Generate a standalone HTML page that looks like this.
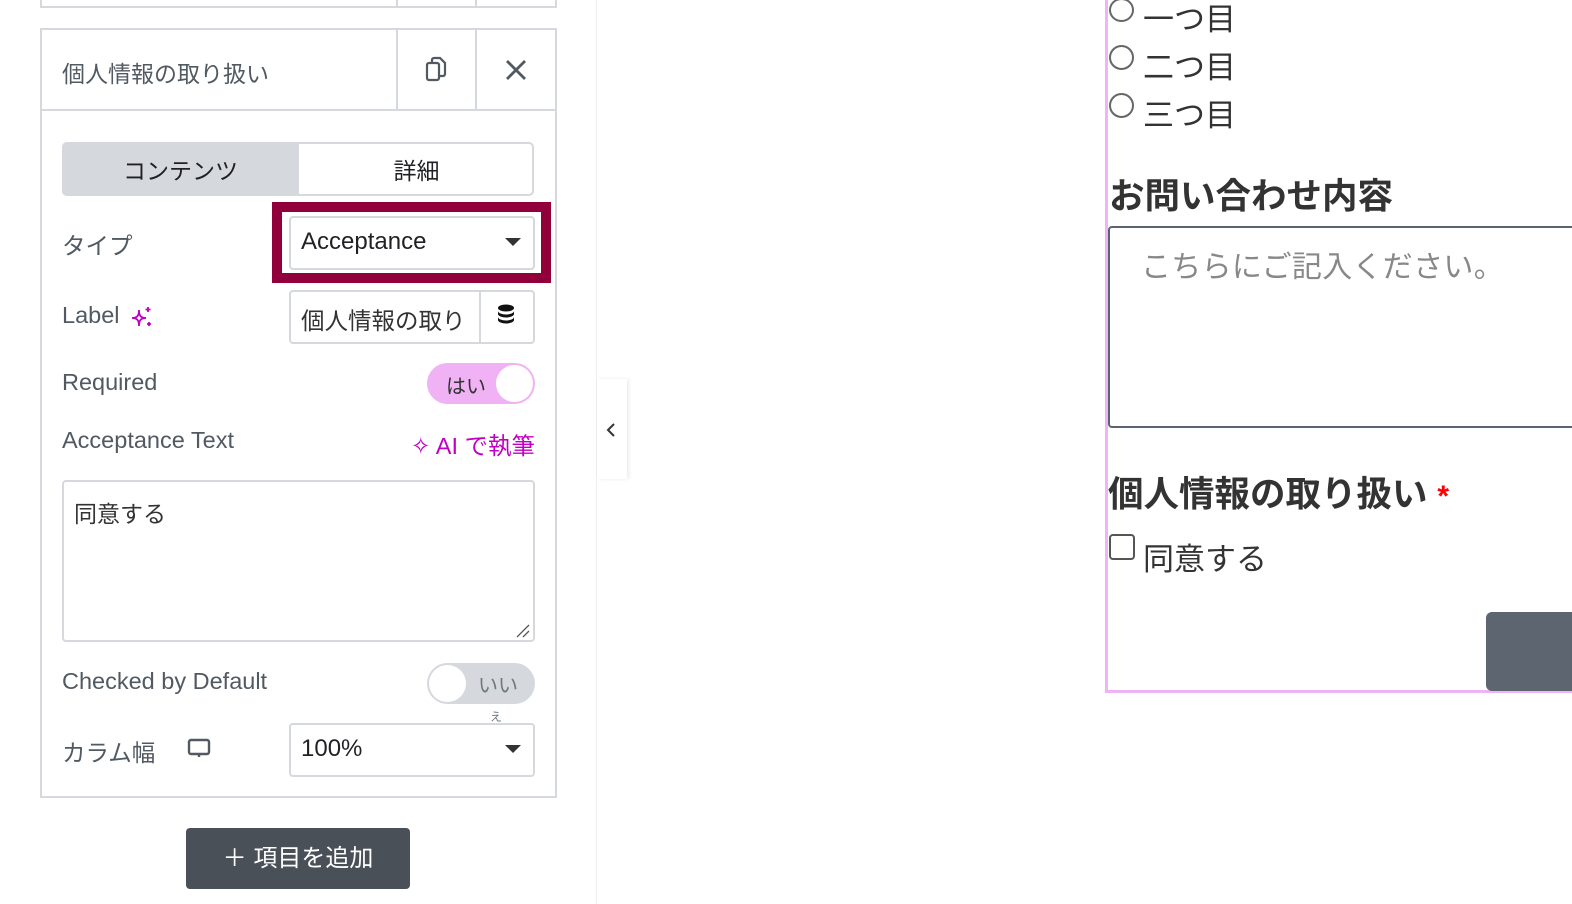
<!DOCTYPE html>
<html><head><meta charset="utf-8"><style>
*{box-sizing:border-box;margin:0;padding:0}
body{width:1572px;height:904px;position:relative;overflow:hidden;background:#fff;font-family:"Liberation Sans","Noto Sans CJK JP",sans-serif;color:#515962}
.a{position:absolute}
.lbl{font-size:23.5px;color:#515962}
.inp{border:2px solid #d5d8dc;border-radius:4px;background:#fff}
</style></head><body>
<div class="a" style="left:0;top:0;width:597px;height:904px;background:#fff;border-right:1px solid #eceef0"></div>
<div class="a" style="left:40px;top:-10px;width:517px;height:18px;border:2px solid #d5d8dc"></div>
<div class="a" style="left:396px;top:0;width:2px;height:8px;background:#d5d8dc"></div>
<div class="a" style="left:475px;top:0;width:2px;height:8px;background:#d5d8dc"></div>
<div class="a" style="left:40px;top:28px;width:517px;height:770px;border:2px solid #d5d8dc"></div>
<div class="a" style="left:40px;top:109px;width:517px;height:2px;background:#d5d8dc"></div>
<div class="a" style="left:396px;top:28px;width:2px;height:82px;background:#d5d8dc"></div>
<div class="a" style="left:475px;top:28px;width:2px;height:82px;background:#d5d8dc"></div>
<div class="a" style="left:62px;top:55px;font-size:23px;color:#515962">個人情報の取り扱い</div>
<svg class="a" style="left:424px;top:56px" width="24" height="28" viewBox="0 0 24 28" fill="none" stroke="#515962" stroke-width="2.2"><rect x="3" y="7" width="12" height="17" rx="2"/><path d="M8 7V4a2 2 0 0 1 2-2h6l5 5v11a2 2 0 0 1-2 2h-4"/></svg>
<svg class="a" style="left:505px;top:59px" width="22" height="22" viewBox="0 0 22 22" stroke="#515962" stroke-width="2.8"><path d="M2 2L20 20M20 2L2 20"/></svg>
<div class="a" style="left:62px;top:142px;width:472px;height:54px;border:2px solid #d5d8dc;border-radius:5px;background:#fff"></div>
<div class="a" style="left:62px;top:142px;width:237px;height:54px;background:#d5d8dc;border-radius:5px 0 0 5px"></div>
<div class="a" style="left:62px;top:152px;width:237px;text-align:center;font-size:23px;color:#1f2124">コンテンツ</div>
<div class="a" style="left:299px;top:152px;width:235px;text-align:center;font-size:23px;color:#1f2124">詳細</div>
<div class="a lbl" style="left:62px;top:227px">タイプ</div>
<div class="a" style="left:272px;top:202px;width:279px;height:81px;background:#92003b"></div>
<div class="a" style="left:282px;top:212px;width:259px;height:61px;background:#fff"></div>
<div class="a inp" style="left:289px;top:216px;width:246px;height:54px"></div>
<div class="a" style="left:301px;top:228px;font-size:24px;color:#1f2124">Acceptance</div>
<div class="a" style="left:505px;top:238px;border-left:8px solid transparent;border-right:8px solid transparent;border-top:8px solid #333"></div>
<div class="a lbl" style="left:62px;top:302px">Label</div>
<svg class="a" style="left:130px;top:305px" width="24" height="24" viewBox="0 0 24 24" fill="none" stroke="#c200c2" stroke-width="1.8"><path d="M9 5C9 11 7 13 2 13C7 13 9 15 9 21C9 15 11 13 16 13C11 13 9 11 9 5Z"/><path d="M18 2v5M15.5 4.5h5M19 17v4M17 19h4"/></svg>
<div class="a inp" style="left:289px;top:290px;width:246px;height:54px"></div>
<div class="a" style="left:479px;top:290px;width:2px;height:54px;background:#d5d8dc"></div>
<div class="a" style="left:301px;top:302px;font-size:23.5px;color:#333">個人情報の取り</div>
<svg class="a" style="left:496px;top:304px" width="20" height="24" viewBox="0 0 20 24"><ellipse cx="10" cy="4" rx="8" ry="3.5" fill="#111"/><path d="M2 7c0 2 4 3.5 8 3.5s8-1.5 8-3.5v3c0 2-4 3.5-8 3.5S2 12 2 10z" fill="#111"/><path d="M2 13c0 2 4 3.5 8 3.5s8-1.5 8-3.5v3c0 2-4 3.5-8 3.5S2 18 2 16z" fill="#111"/></svg>
<div class="a lbl" style="left:62px;top:369px">Required</div>
<div class="a" style="left:427px;top:363px;width:108px;height:41px;border-radius:21px;background:#f0b2f4"></div>
<div class="a" style="left:446px;top:370px;font-size:20px;color:#333">はい</div>
<div class="a" style="left:496px;top:365px;width:37px;height:37px;border-radius:50%;background:#fff"></div>
<div class="a lbl" style="left:62px;top:427px">Acceptance Text</div>
<div class="a" style="left:380px;top:427px;width:155px;text-align:right;font-size:23.5px;color:#c200c2">✧ AI で執筆</div>
<div class="a inp" style="left:62px;top:480px;width:473px;height:162px"></div>
<div class="a" style="left:74px;top:495px;font-size:23px;color:#333">同意する</div>
<svg class="a" style="left:516px;top:624px" width="14" height="14" stroke="#555" stroke-width="1.3"><path d="M1 13L13 1M7 13L13 7"/></svg>
<div class="a lbl" style="left:62px;top:668px">Checked by Default</div>
<div class="a" style="left:427px;top:663px;width:108px;height:41px;border-radius:21px;background:#d5d8dc"></div>
<div class="a" style="left:429px;top:665px;width:37px;height:37px;border-radius:50%;background:#fff"></div>
<div class="a" style="left:478px;top:669px;font-size:20px;color:#6d7882">いい</div>
<div class="a" style="left:490px;top:708px;font-size:12px;color:#6d7882">え</div>
<div class="a lbl" style="left:62px;top:734px">カラム幅</div>
<svg class="a" style="left:187px;top:738px" width="24" height="22" viewBox="0 0 24 22" fill="none" stroke="#515962" stroke-width="2.4"><rect x="2" y="2" width="20" height="14" rx="2"/><path d="M12 16v3"/></svg>
<div class="a inp" style="left:289px;top:723px;width:246px;height:54px"></div>
<div class="a" style="left:301px;top:735px;font-size:24px;color:#1f2124">100%</div>
<div class="a" style="left:505px;top:745px;border-left:8px solid transparent;border-right:8px solid transparent;border-top:8px solid #333"></div>
<div class="a" style="left:186px;top:828px;width:224px;height:61px;background:#4a5057;border-radius:4px;color:#fff;font-size:24px;text-align:center;line-height:61px">＋ 項目を追加</div>
<div class="a" style="left:597px;top:379px;width:30px;height:100px;background:#fff;box-shadow:2px 0 4px rgba(0,0,0,.08)"></div>
<svg class="a" style="left:605px;top:422px" width="12" height="16" stroke="#333" stroke-width="2" fill="none"><path d="M9 2L3 8L9 14"/></svg>
<div class="a" style="left:1105px;top:-5px;width:480px;height:698px;border-left:3px solid #f0b3f5;border-bottom:3px solid #f0b3f5"></div>
<div class="a" style="left:1109px;top:-2px;width:25px;height:24px;border:2px solid #666;border-radius:50%"></div>
<div class="a" style="left:1109px;top:45px;width:25px;height:25px;border:2px solid #666;border-radius:50%"></div>
<div class="a" style="left:1109px;top:93px;width:25px;height:25px;border:2px solid #666;border-radius:50%"></div>
<div class="a" style="left:1143px;top:-6px;font-size:31px;color:#333">一つ目</div>
<div class="a" style="left:1143px;top:42px;font-size:31px;color:#333">二つ目</div>
<div class="a" style="left:1143px;top:90px;font-size:31px;color:#333">三つ目</div>
<div class="a" style="left:1109px;top:168px;font-size:35.5px;font-weight:bold;color:#333">お問い合わせ内容</div>
<div class="a" style="left:1108px;top:226px;width:480px;height:202px;border:2px solid #5b6470;border-radius:4px"></div>
<div class="a" style="left:1141px;top:242px;font-size:30px;color:#888;letter-spacing:0.3px">こちらにご記入ください。</div>
<div class="a" style="left:1108px;top:466px;font-size:35.5px;font-weight:bold;color:#333">個人情報の取り扱い <span style="color:#f00;font-size:30px">*</span></div>
<div class="a" style="left:1109px;top:534px;width:26px;height:26px;border:2px solid #555;border-radius:4px"></div>
<div class="a" style="left:1143px;top:534px;font-size:31px;color:#333">同意する</div>
<div class="a" style="left:1486px;top:612px;width:100px;height:79px;background:#5c6570;border-radius:6px"></div>
</body></html>
